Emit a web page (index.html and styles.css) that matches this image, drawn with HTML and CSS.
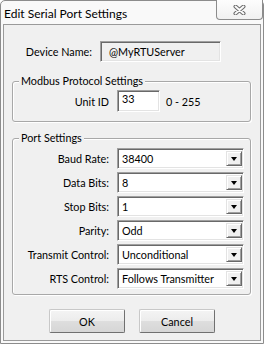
FILE: index.html
```html
<!DOCTYPE html>
<html lang="en">
<head>
  <meta charset="UTF-8" />
  <title>Edit Serial Port Settings</title>
  <link rel="stylesheet" href="styles.css">
</head>
<body>

  <div class="window">
    <div class="titlebar">
      <span class="title">Edit Serial Port Settings</span>
      <button class="close" aria-label="Close">
        <svg width="13" height="10" viewBox="0 0 13 10">
          <path d="M2.5 1.5 L10.5 8.5 M10.5 1.5 L2.5 8.5" stroke="#6a6a6a" stroke-width="4" stroke-linecap="round" fill="none"/>
          <path d="M2.5 1.5 L10.5 8.5 M10.5 1.5 L2.5 8.5" stroke="#fbfbfb" stroke-width="2" stroke-linecap="round" fill="none"/>
        </svg>
      </button>
    </div>

    <div class="client">
      <div class="device-row">
        <label class="label">Device Name:</label>
        <div class="field readonly">@MyRTUServer</div>
      </div>

      <fieldset class="group modbus">
        <legend>Modbus Protocol Settings</legend>
        <div class="row">
          <label class="label">Unit ID</label>
          <div class="field unit">33</div>
          <span class="range">0 - 255</span>
        </div>
      </fieldset>

      <fieldset class="group port">
        <legend>Port Settings</legend>
        <div class="rows">
          <label class="label">Baud Rate:</label>
          <div class="field combo"><span>38400</span><i class="drop"></i></div>
          <label class="label">Data Bits:</label>
          <div class="field combo"><span>8</span><i class="drop"></i></div>
          <label class="label">Stop Bits:</label>
          <div class="field combo"><span>1</span><i class="drop"></i></div>
          <label class="label">Parity:</label>
          <div class="field combo"><span>Odd</span><i class="drop"></i></div>
          <label class="label">Transmit Control:</label>
          <div class="field combo"><span>Unconditional</span><i class="drop"></i></div>
          <label class="label">RTS Control:</label>
          <div class="field combo"><span>Follows Transmitter</span><i class="drop"></i></div>
        </div>
      </fieldset>

      <div class="buttons">
        <button class="btn">OK</button>
        <button class="btn">Cancel</button>
      </div>
    </div>
  </div>

</body>
</html>
```
FILE: styles.css
```css
body {
  margin: 0;
  background: #fff;
  font-family: Lato, "Noto Sans", sans-serif;
  font-size: 10.8px;
  color: #000;
}

.window {
  width: 264px;
  height: 344px;
  box-sizing: border-box;
  border: 1px solid #8c8c8c;
  border-radius: 5px 5px 0 0;
  background: #f9f9f9;
  display: flex;
  flex-direction: column;
}

.titlebar {
  height: 23px;
  display: flex;
  align-items: flex-start;
}

.title {
  font-size: 12px;
  line-height: 14px;
  margin: 6px 0 0 3px;
}

.close {
  margin: -1px 0 0 auto;
  width: 47px;
  height: 20px;
  padding: 0;
  border: 1px solid #8c8c8c;
  border-top: none;
  border-radius: 0 0 4px 4px;
  background: linear-gradient(#fdfdfd, #f1f1f1);
  display: flex;
  align-items: center;
  justify-content: center;
}

.client {
  flex: 1;
  margin: 0 2px 2px 2px;
  border: 1px solid #9a9a9a;
  background: #f0f0f0;
  padding-top: 16px;
}

.label {
  text-align: right;
  white-space: nowrap;
}

.field {
  box-sizing: border-box;
  border: 1px solid;
  border-color: #a0a0a0 #fff #fff #a0a0a0;
  box-shadow: inset 1px 1px 0 #696969, inset -1px -1px 0 #e3e3e3;
  background: #fff;
  white-space: nowrap;
}

.device-row {
  display: flex;
  align-items: center;
  height: 21px;
}

.device-row .label {
  width: 88px;
  margin-right: 8px;
}

.readonly {
  width: 121px;
  height: 21px;
  line-height: 19px;
  padding-left: 8px;
  background: #f0f0f0;
}

.group {
  margin: 0 9px 0 8px;
  padding: 0;
  border: 1px solid #a8a8a8;
  border-radius: 3px;
  box-shadow: inset 1px 1px 0 #fff, 1px 1px 0 #fff;
}

.group legend {
  margin-left: 6px;
  padding: 0 2px;
  line-height: 14px;
  background: #f0f0f0;
}

.modbus {
  margin-top: 12px;
  padding: 2px 0 9px 0;
}

.row {
  display: flex;
  align-items: center;
  height: 22px;
}

.row .label {
  width: 96px;
  margin-right: 8px;
}

.unit {
  width: 43px;
  height: 22px;
  padding: 1px 0 0 4px;
  line-height: 14px;
}

.range {
  margin-left: 6px;
}

.port {
  margin-top: 9px;
  padding: 3px 0 5px 0;
}

.rows {
  display: grid;
  grid-template-columns: 96px 127px;
  grid-auto-rows: 21px;
  row-gap: 3px;
  column-gap: 8px;
  align-items: center;
}

.combo {
  height: 21px;
  display: flex;
  align-items: center;
  padding: 2px 1px 2px 4px;
}

.combo span {
  flex: 1;
}

.drop {
  width: 16px;
  height: 15px;
  box-sizing: border-box;
  background: #f0f0f0;
  border: 1px solid;
  border-color: #e3e3e3 #696969 #696969 #e3e3e3;
  box-shadow: inset 1px 1px 0 #fff, inset -1px -1px 0 #a0a0a0;
  display: flex;
  align-items: center;
  justify-content: center;
}

.drop::after {
  content: "";
  border-left: 3.5px solid transparent;
  border-right: 3.5px solid transparent;
  border-top: 4px solid #000;
  margin-top: 1px;
}

.buttons {
  display: flex;
  justify-content: center;
  gap: 14px;
  margin-top: 14px;
}

.btn {
  width: 76px;
  height: 24px;
  font: inherit;
  color: #000;
  border: 1px solid;
  border-color: #c8c8c8 #707070 #707070 #c8c8c8;
  border-radius: 2px;
  background: linear-gradient(#f4f4f4 0%, #ececec 50%, #dedede 51%, #d6d6d6 100%);
  box-shadow: inset 1px 1px 0 #fff;
  padding: 0;
}
```
